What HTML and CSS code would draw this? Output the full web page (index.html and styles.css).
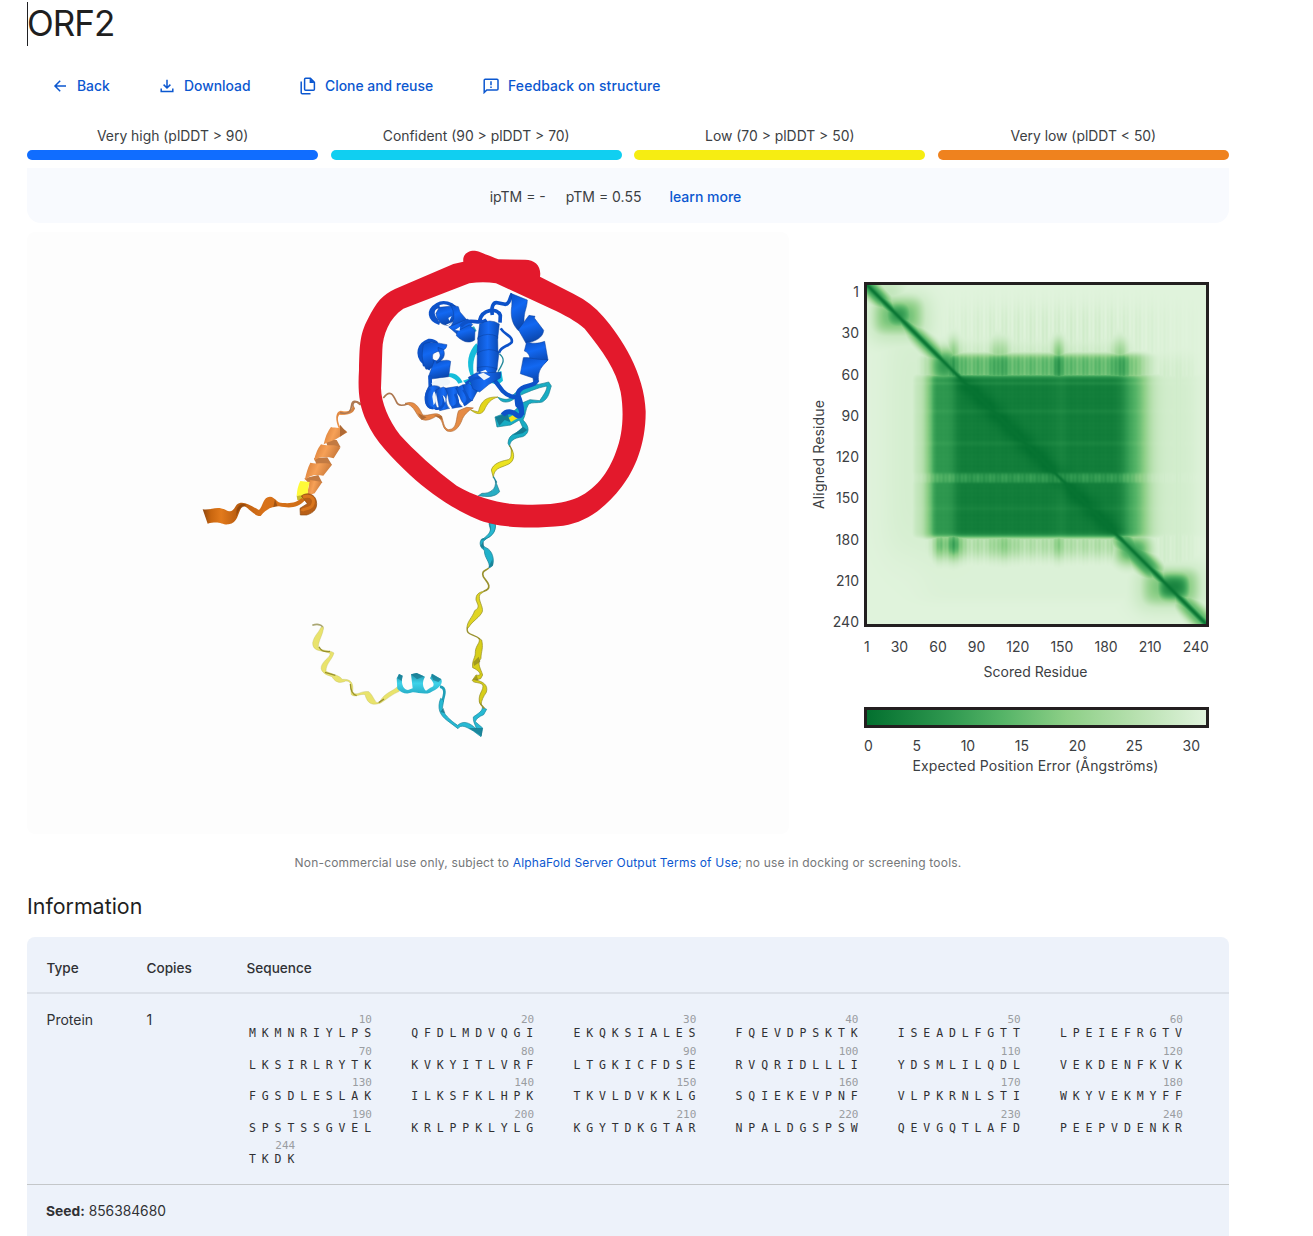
FILE: index.html
```html
<!DOCTYPE html>
<html lang="en">
<head>
<meta charset="utf-8">
<title>ORF2</title>
<link rel="stylesheet" href="styles.css">
</head>
<body>
<main class="page">
  <h1 class="title">ORF2</h1>
  <nav class="actions">
    <a class="action back"><svg width="14" height="14" viewBox="0 0 14 14"><path d="M13 7H2.400M7.200 1.800 2 7 7.200 12.200"/></svg><span>Back</span></a>
    <a class="action download"><svg width="14" height="14" viewBox="0 0 14 14"><path d="M7 .8V9M3.600 5.600 7 9 10.400 5.600M1.200 9.600v2.900H12.800V9.600"/></svg><span>Download</span></a>
    <a class="action clone"><svg width="16" height="18" viewBox="0 0 16 18"><path d="M5.600 1.300H10.400L14.400 5.300V12.300Q14.400 13.300 13.400 13.300H5.600Q4.600 13.300 4.600 12.300V2.300Q4.600 1.300 5.600 1.300zM1.200 4.500V15.800Q1.200 16.800 2.200 16.800H10.500"/><path class="solid" d="M9.600 1V6h5z"/></svg><span>Clone and reuse</span></a>
    <a class="action feedback"><svg width="16" height="16" viewBox="0 0 16 16"><path d="M1.200 14.500V2.200Q1.200 1.200 2.200 1.200H14Q15 1.200 15 2.200V10.900Q15 11.900 14 11.900H3.800zM8 3.300V7.200M8 8.500V10"/></svg><span>Feedback on structure</span></a>
  </nav>
  <section class="legend">
    <div class="level"><span>Very high (plDDT &gt; 90)</span><i class="bar very-high"></i></div>
    <div class="level"><span>Confident (90 &gt; plDDT &gt; 70)</span><i class="bar confident"></i></div>
    <div class="level"><span>Low (70 &gt; plDDT &gt; 50)</span><i class="bar low"></i></div>
    <div class="level"><span>Very low (plDDT &lt; 50)</span><i class="bar very-low"></i></div>
  </section>
  <section class="scores"><span class="iptm">ipTM = -</span><span class="ptm">pTM = 0.55</span><a class="more">learn more</a></section>
  <section class="results">
    <svg class="viewer" viewBox="27 232 762 602">
      <defs>
        <linearGradient id="blue" x1="0" y1="0" x2=".3" y2="1"><stop offset="0" stop-color="#0a4fc4"/><stop offset=".45" stop-color="#1268f2"/><stop offset="1" stop-color="#0b47ae"/></linearGradient>
        <linearGradient id="blue2" x1="0" y1="0" x2="1" y2="0"><stop offset="0" stop-color="#0b4fc0"/><stop offset=".5" stop-color="#176cf5"/><stop offset="1" stop-color="#0b4bb6"/></linearGradient>
        <linearGradient id="orange" x1="0" y1="0" x2="1" y2=".3"><stop offset="0" stop-color="#d47a35"/><stop offset=".5" stop-color="#f7a157"/><stop offset="1" stop-color="#c8783a"/></linearGradient>
        <linearGradient id="rust" x1="0" y1="0" x2="1" y2="0"><stop offset="0" stop-color="#8b4510"/><stop offset=".08" stop-color="#c9660f"/><stop offset=".18" stop-color="#e27a1c"/><stop offset=".35" stop-color="#b85c0f"/><stop offset=".6" stop-color="#d8721a"/><stop offset="1" stop-color="#cf6d16"/></linearGradient>
        <linearGradient id="cyan" x1="0" y1="0" x2="0" y2="1"><stop offset="0" stop-color="#1c8ca4"/><stop offset=".5" stop-color="#3fd3ea"/><stop offset="1" stop-color="#28afc8"/></linearGradient>
      </defs>
      <!-- N-terminal tail and helix -->
      <g transform="translate(190 380) scale(.33333)">
        <path class="line tan w5" d="M515 75C495 55 482 70 493 88"/>
        <path fill="url(#orange)" d="M492 78C500 98 475 108 448 104C440 112 444 130 456 150L449 150C434 120 436 95 452 92C470 95 482 96 487 82Z"/>
        <path fill="#c27a42" d="M405 178L440 180L452 202L415 205ZM372 234L412 232L426 255L382 260ZM343 295L385 285L397 308L360 315Z"/>
        <path fill="url(#orange)" d="M423 141C435 145 460 140 472 157L440 176C425 184 415 184 401 193Q408 160 423 141Z"/>
        <path fill="url(#orange)" d="M393 193C415 200 435 190 451 203L431 235C410 230 390 228 372 242Q378 212 393 193Z"/>
        <path fill="url(#orange)" d="M361 248C380 254 408 245 426 254L400 287C375 283 360 285 344 302Q350 270 361 248Z"/>
        <path fill="url(#orange)" d="M360 300L397 306L374 340L350 348Z"/>
        <path fill="#c9bc2d" d="M320 347L345 340L350 362L322 360Z"/>
        <path fill="#fffa38" d="M331 303L359 306Q353 323 353 345L320 347Q322 320 331 303Z"/>
        <path fill="url(#rust)" d="M38 388C65 392 78 376 106 389C128 402 130 387 140 374C158 359 180 376 207 390C219 379 219 350 240 350C257 351 259 370 280 369C305 371 320 367 335 354L345 361C325 384 300 386 267 379C245 379 225 390 212 408C190 409 175 379 159 379C143 390 147 430 116 433C96 436 90 421 53 431Z"/>
        <path fill="#74380b" opacity=".55" d="M140 388Q150 366 170 374L161 380Q147 382 139 410ZM255 357L262 378L250 382Z"/>
        <path fill="#b85f17" stroke="#8d4a12" stroke-width="2" d="M334 348C350 335 375 342 379 363C384 386 370 399 350 405L331 405L330 385L352 371Z"/>
        <path fill="none" stroke="#d9761d" stroke-width="9" d="M339 351C366 344 377 358 366 378C353 392 340 382 336 393"/>
      </g>
      <!-- C-terminal tail -->
      <g transform="translate(300 500) scale(.33333)">
        <path class="line pale w5" d="M37 376C54 370 72 375 67 388"/>
        <path fill="#e9e36c" stroke="#b9b65b" stroke-width="1" d="M70 380C72 400 55 420 55 441C65 455 90 449 102 459C96 480 78 490 78 514C94 522 122 527 126 538C154 536 161 549 158 575C172 592 180 570 207 575C224 592 224 612 238 607C255 575 280 575 294 558L298 574C276 583 260 598 242 609C222 616 203 616 195 584C180 580 166 594 154 584C150 563 159 543 137 543C116 554 102 542 96 530C69 523 58 510 66 494C76 476 87 475 91 461C72 449 37 459 38 428C43 405 55 400 62 383Z"/>
        <path class="line olive w4" d="M57 440Q65 458 90 454M75 517L106 526M151 552Q152 582 170 587M236 608L252 597"/>
        <path fill="url(#cyan)" d="M290 535L297 522L308 527C303 545 306 567 324 570L338 565L333 523L350 519L375 530C366 545 367 562 378 572L391 563C408 560 400 545 390 535L397 521L424 538C431 555 411 568 390 578C373 585 350 576 338 577C321 584 304 580 292 566Z"/>
        <path fill="#19788e" opacity=".7" d="M292 535L297 522L308 527L305 543ZM333 523L350 519L372 529L351 538ZM393 522L424 537L415 546L399 540Z"/>
        <path fill="none" stroke="#1f9eb7" stroke-width="8" d="M420 560C440 563 433 585 427 605"/>
        <path fill="#27b9d3" stroke="#17879d" stroke-width="2" d="M422 595C410 625 420 646 442 662L474 686C483 672 498 680 520 693L543 710L548 684L526 665Q529 653 551 644L560 628L547 622C548 633 535 640 520 651C519 670 530 680 528 686C507 666 489 661 473 676C450 661 430 641 427 625L431 602Z"/>
        <path class="line olive w5" d="M553 625C542 613 535 607 543 596"/>
        <path fill="#d7ce19" stroke="#918a20" stroke-width="2" d="M538 605C534 580 553 570 548 554C535 545 520 550 517 541L528 525C552 530 536 510 518 503C515 480 527 474 526 455C527 435 545 425 535 415L545 420C551 445 543 455 543 475C530 491 542 505 548 525L542 536L527 540C548 544 566 555 559 577C550 590 545 600 543 614Z"/>
        <path class="line olive w4" d="M540 417C520 400 495 407 503 380"/>
        <path fill="#e0d523" stroke="#8e8924" stroke-width="2" d="M501 385C500 365 517 353 524 332C542 322 532 313 528 300C527 283 537 276 553 274L540 283C532 300 551 319 547 335C540 352 517 363 506 382Z"/>
        <path class="line olive w5" d="M551 274C584 263 555 240 550 230C543 212 557 213 566 204"/>
        <path fill="#20b1ca" stroke="#15788c" stroke-width="2" d="M568 204C570 184 553 175 553 151C541 144 536 128 545 117L568 111C580 104 569 85 567 70L585 70C589 90 578 103 566 111L552 122C544 130 550 140 558 143C577 150 585 180 577 198Z"/>
        <path class="deep" d="M541 138L551 124L552 147ZM564 205L577 178L579 195ZM421 636L430 623L436 640ZM507 684L548 684L545 709Z"/>
        <path fill="#7f781f" opacity=".6" d="M520 486L536 470L541 485L522 498ZM517 541L530 526L535 541Z"/>
      </g>
      <!-- folded core -->
      <g transform="translate(340 240) scale(.33333)">
        <path class="line tan w5" d="M0 518C48 530 26 485 42 484Q49 483 62 495M130 474C150 448 159 463 169 485C175 501 192 496 204 491"/>
        <path fill="#e58b45" stroke="#b06b36" stroke-width="2" d="M195 490C218 484 230 487 248 525C268 530 288 512 305 529C311 548 312 567 326 569C354 568 347 530 356 512L380 502L400 504C383 513 374 524 368 535C357 567 340 579 321 573C302 560 314 538 288 529C275 537 253 549 237 531C223 512 221 497 195 490Z"/>
        <path fill="#b06a35" d="M234 520L260 532L245 540ZM282 525L305 528L307 540ZM0 554L19 576L0 590Z"/>
        <path fill="#e3d51a" stroke="#9f971e" stroke-width="2" d="M392 510L415 516C423 480 440 470 474 471C452 477 442 490 433 510C423 527 408 522 392 510Z"/>
        <path fill="#18acc3" stroke="#177f92" stroke-width="2" d="M474 472C490 478 508 485 520 464C545 438 590 436 626 426L634 438C628 453 628 474 607 486C590 490 576 486 566 492C555 510 558 524 549 540C572 562 567 582 548 590C520 594 509 604 509 620L504 610C505 577 538 581 549 564L538 540L512 555L471 561L465 531L499 518C515 520 530 510 544 490L570 479L599 482C610 466 623 448 620 438C590 444 562 456 528 472C507 492 483 490 474 472Z"/>
        <path fill="#137c94" d="M466 532L502 520L511 546L494 540L478 557ZM549 560L562 570L548 580L519 586Z"/>
        <path class="line olive w4" d="M509 617Q519 633 517 646"/>
        <path fill="#ece31f" stroke="#918d1d" stroke-width="2" d="M514 626C529 650 518 669 500 675C480 684 462 684 460 713L454 690C459 672 480 664 501 660C516 657 513 646 514 626Z"/>
        <path class="line cyanline w4" d="M460 710L470 728"/>
        <path fill="#28adc3" stroke="#1d7789" stroke-width="2" d="M466 722L479 755C463 774 438 770 415 767L426 760C450 761 470 748 466 722Z"/>
        <path fill="#28b8d1" stroke="#187b8d" stroke-width="2" d="M448 849L466 851C468 879 455 892 425 900C451 881 456 872 448 849Z"/>
      </g>
      <g transform="translate(400 280) scale(.33333)">
        <path fill="#15bdda" d="M229 190L239 205C219 230 217 255 222 290L211 285C198 250 204 216 229 190ZM146 281C163 275 180 289 188 307L175 311C166 294 153 292 146 290ZM189 302L228 288L249 325L230 337L210 325ZM264 289L304 273L309 302L294 315L272 308Z"/>
        <path class="line cyanline w4" d="M298 221C320 239 306 254 294 275"/>
        <path fill="#28a6ba" d="M193 149L222 139L230 153L203 165Z"/>
        <path fill="#f0e51b" d="M326 413L345 401L354 414L333 426Z"/>
        <path class="coil w8" d="M119 130C86 119 81 91 112 73C132 61 155 72 165 82M112 124C91 102 97 82 119 80"/>
        <g class="ribbon">
          <path d="M118 82L165 77C175 95 161 134 141 136C116 135 108 110 108 100Z"/>
          <path d="M150 74L175 80L180 96L200 119L173 151L149 143C165 125 166 97 150 74Z"/>
          <path d="M146 141L203 117L218 134L181 171Z"/>
          <path d="M172 153L208 135L225 151L224 180C206 193 186 184 169 167Z"/>
        </g>
        <path class="slit" d="M145 114L155 108L148 123ZM137 134L157 126L146 136ZM165 150L180 140L179 152Z"/>
        <path class="coil w9" d="M182 139C209 107 235 138 260 120M238 124C246 85 293 83 301 106L300 128M277 105C273 83 279 65 292 68L315 73C333 71 326 55 337 42"/>
        <path class="coil w7" d="M302 145C315 166 340 168 335 187C321 202 306 196 297 218"/>
        <g class="ribbon2">
          <path d="M239 132Q270 114 298 132L293 176Q264 167 233 178Z"/>
          <path d="M234 172Q265 155 293 170L294 221Q264 212 231 225Z"/>
          <path d="M232 218Q268 200 297 217L291 269Q266 259 231 275Z"/>
          <path d="M232 263Q258 255 291 266L281 295L242 293Z"/>
        </g>
        <path class="slit" d="M241 275L257 269L269 286L252 300Z"/>
        <g class="ribbon">
          <path d="M332 40L382 60C381 87 372 91 372 124C370 140 366 152 354 151C341 136 332 119 334 88C338 63 334 56 332 40Z"/>
          <path d="M355 149L387 106C401 110 409 105 403 114L431 151C429 172 410 183 378 190L368 172Z"/>
          <path d="M373 213L380 185C397 192 415 191 434 184L444 240C431 257 410 262 380 254C396 239 389 218 373 213Z"/>
          <path d="M361 281L370 233C388 231 407 240 444 239C428 260 412 266 416 306L401 309L399 294Z"/>
        </g>
        <path class="coil w10" d="M409 300C410 323 360 310 353 342C369 377 365 391 367 405M277 292L308 333Q330 355 354 350"/>
        <path class="coil w8" d="M71 248C48 224 54 193 87 181Q101 180 111 190M72 233C59 211 66 188 91 190M84 269L103 240M62 210L74 258"/>
        <g class="ribbon">
          <path d="M70 193C91 180 115 190 141 194C139 218 112 207 98 224C95 240 104 244 102 261L78 268C62 239 67 216 70 193Z"/>
          <path d="M87 286L103 241C122 248 137 235 152 244L146 290L87 298Z"/>
          <path d="M110 243C132 224 112 218 114 202L130 208C138 226 130 241 110 250Z"/>
        </g>
        <path class="coil w9" d="M90 286L91 324"/>
        <path class="slit" d="M94 310Q120 288 144 298Q158 305 143 316L105 322Z"/>
        <g class="ribbon2">
          <path d="M85 321C100 314 116 317 121 323C101 337 99 363 114 388L93 386C67 376 74 342 85 321Z"/>
          <path d="M107 330L130 321L153 332C132 341 137 378 149 385L119 392Z"/>
          <path d="M135 325L173 319L183 344C171 349 171 369 187 380L161 384C139 374 151 345 135 325Z"/>
          <path d="M167 325L189 314L209 333C200 340 209 360 218 360L197 376C178 364 180 341 167 325Z"/>
          <path d="M188 315L207 310L234 330L216 363L199 348Z"/>
          <path d="M205 292L230 278L303 277L301 294L267 313L239 336L219 327Z"/>
        </g>
        <path class="coil w7" d="M99 384C74 385 73 341 89 325M106 386C133 389 135 363 130 347M155 382C180 379 175 358 165 342M191 375C213 362 202 348 190 329M197 311Q221 290 251 292"/>
        <path class="slit" d="M97 350Q102 325 106 341Q110 366 101 376ZM128 345Q141 353 135 369ZM171 340Q182 352 177 360ZM233 284L250 278L271 290L252 301Z"/>
        <path class="coil w12" d="M308 405C320 390 337 393 351 406C366 415 371 388 353 375L350 349"/>
      </g>
      <path class="marker" fill-rule="evenodd" transform="translate(340 240) scale(.33333)" d="M370 65C367 45 382 31 405 32C417 33 445 47 475 58L553 59C585 58 605 79 600 110L700 161Q755 188 790 230C843 290 914 400 917 514C918 610 885 690 845 740C795 805 739 847 670 857C570 867 470 864 410 837C330 802 268 758 210 705C155 652 105 603 80 545C54 493 54 440 57 390C59 320 58 284 84 236C110 185 128 164 165 147L340 72ZM388 130L190 206C148 233 128 285 127 330L123 445C124 488 145 540 180 585C220 629 285 690 350 737C400 767 460 785 510 791C590 798 660 793 702 777C766 753 807 695 828 635C848 585 853 520 842 456C829 390 788 333 734 266C710 244 670 223 635 207L468 130Q430 124 388 130Z"/>
    </svg>
    <div class="error-plot">
      <div class="matrix">
        <div class="y-title"><span>Aligned Residue</span></div>
        <div class="y-axis"><span>1</span><span>30</span><span>60</span><span>90</span><span>120</span><span>150</span><span>180</span><span>210</span><span>240</span></div>
        <canvas class="heatmap" width="339" height="339"></canvas>
      </div>
      <div class="x-axis"><span>1</span><span>30</span><span>60</span><span>90</span><span>120</span><span>150</span><span>180</span><span>210</span><span>240</span></div>
      <div class="x-title">Scored Residue</div>
      <div class="ramp"></div>
      <div class="ramp-axis"><span>0</span><span>5</span><span>10</span><span>15</span><span>20</span><span>25</span><span>30</span></div>
      <div class="ramp-title">Expected Position Error (Ångströms)</div>
    </div>
  </section>
  <p class="terms"><span>Non-commercial use only, subject to <a>AlphaFold Server Output Terms of Use</a>; no use in docking or screening tools.</span></p>
  <h2 class="heading">Information</h2>
  <section class="info">
    <div class="row head"><span>Type</span><span>Copies</span><span>Sequence</span></div>
    <div class="row body"><span>Protein</span><span>1</span>
      <div class="sequence">
        <div class="chunk"><i>10</i><b>MKMNRIYLPS</b></div><div class="chunk"><i>20</i><b>QFDLMDVQGI</b></div><div class="chunk"><i>30</i><b>EKQKSIALES</b></div><div class="chunk"><i>40</i><b>FQEVDPSKTK</b></div><div class="chunk"><i>50</i><b>ISEADLFGTT</b></div><div class="chunk"><i>60</i><b>LPEIEFRGTV</b></div>
        <div class="chunk"><i>70</i><b>LKSIRLRYTK</b></div><div class="chunk"><i>80</i><b>KVKYITLVRF</b></div><div class="chunk"><i>90</i><b>LTGKICFDSE</b></div><div class="chunk"><i>100</i><b>RVQRIDLLLI</b></div><div class="chunk"><i>110</i><b>YDSMLILQDL</b></div><div class="chunk"><i>120</i><b>VEKDENFKVK</b></div>
        <div class="chunk"><i>130</i><b>FGSDLESLAK</b></div><div class="chunk"><i>140</i><b>ILKSFKLHPK</b></div><div class="chunk"><i>150</i><b>TKVLDVKKLG</b></div><div class="chunk"><i>160</i><b>SQIEKEVPNF</b></div><div class="chunk"><i>170</i><b>VLPKRNLSTI</b></div><div class="chunk"><i>180</i><b>WKYVEKMYFF</b></div>
        <div class="chunk"><i>190</i><b>SPSTSSGVEL</b></div><div class="chunk"><i>200</i><b>KRLPPKLYLG</b></div><div class="chunk"><i>210</i><b>KGYTDKGTAR</b></div><div class="chunk"><i>220</i><b>NPALDGSPSW</b></div><div class="chunk"><i>230</i><b>QEVGQTLAFD</b></div><div class="chunk"><i>240</i><b>PEEPVDENKR</b></div>
        <div class="chunk"><i>244</i><b>TKDK</b></div>
      </div>
    </div>
    <div class="seed"><strong>Seed:</strong> 856384680</div>
  </section>
</main>
<script src="heatmap.js"></script>
</body>
</html>
```
FILE: styles.css
```css
* { box-sizing: border-box; }
body { margin: 0; background: #fff; color: #3c4043; font: 14px/20px Inter, Roboto, sans-serif; }
.page { width: 1229px; height: 1236px; padding-left: 27px; overflow: hidden; }
.title { width: 120px; height: 44px; margin: 2px 0 0; border-left: 1px solid #202124; color: #1f1f1f; font-size: 35px; line-height: 43px; font-weight: 400; letter-spacing: -1px; text-indent: -1px; }
.actions { display: flex; height: 80px; padding: 0 0 0 26px; align-items: center; color: #0b57d0; font-size: 13.9px; font-weight: 500; }
.action { display: flex; align-items: center; }
.action svg { fill: none; stroke: #0b57d0; stroke-width: 1.5; }
.action .solid { fill: #0b57d0; stroke: none; }
.back { width: 107px; gap: 10px; }
.download { width: 140px; gap: 10px; }
.clone { width: 183px; gap: 9px; }
.feedback { gap: 9px; letter-spacing: .15px; }
.legend { display: grid; grid-template-columns: repeat(4, 1fr); column-gap: 12.3px; font-size: 13.9px; }
.level { display: flex; flex-direction: column; align-items: center; gap: 4px; }
.bar { width: 100%; height: 10px; border-radius: 5px; }
.very-high { background: #106dff; }
.confident { background: #10cff1; }
.low { background: #f6ed12; }
.very-low { background: #ef821e; }
.scores { display: flex; justify-content: center; height: 55px; margin-top: 8px; padding: 19px 25px 0 0; border-radius: 0 0 14px 14px; background: #f8fafe; line-height: 20px; }
.ptm { margin: 0 28px 0 20px; }
.more, .terms a { color: #0b57d0; }
.more { font-weight: 500; }
.results { display: flex; margin-top: 9px; height: 602px; }
.viewer { width: 762px; height: 602px; border-radius: 8px; background: #fdfdfd; }
.line { fill: none; }
.tan { stroke: #ad7851; }
.pale { stroke: #aaa773; }
.olive { stroke: #99912e; }
.cyanline { stroke: #22889a; }
.w4 { stroke-width: 4; }
.w5 { stroke-width: 5; }
.deep { fill: #146c80; opacity: .65; }
.coil { fill: none; stroke: #0d52c9; stroke-linejoin: round; }
.w7 { stroke-width: 8; }
.w8 { stroke-width: 10; }
.w9 { stroke-width: 11; }
.w10 { stroke-width: 13; }
.w12 { stroke-width: 15; }
.ribbon path { fill: url(#blue); stroke: #0a3f9c; stroke-width: 1.5; }
.ribbon2 path { fill: url(#blue2); stroke: #0a3f9c; stroke-width: 1.5; }
.slit { fill: #eef5fa; }
.marker { fill: #e3192c; }
.error-plot { width: 420px; padding: 50px 0 0 22px; }
.matrix { display: flex; height: 345px; }
.y-title { display: flex; width: 16px; align-items: center; justify-content: center; }
.y-title span { writing-mode: vertical-rl; transform: rotate(180deg); letter-spacing: .15px; }
.y-axis { display: flex; flex-direction: column; justify-content: space-between; width: 32px; height: 350px; text-align: right; }
.heatmap { width: 345px; height: 345px; margin-left: 5px; border: 3px solid #231f20; }
.x-axis, .ramp-axis { display: flex; justify-content: space-between; width: 345px; margin: 10px 0 0 53px; }
.ramp-axis { width: 336px; margin-top: 8px; }
.x-title, .ramp-title { width: 343px; margin-left: 53px; text-align: center; }
.x-title { margin-top: 5px; }
.ramp-title { letter-spacing: .15px; }
.ramp { width: 345px; height: 21px; margin: 25px 0 0 53px; border: 3px solid #231f20; background: linear-gradient(90deg, #03702f, #319a51 25%, #55b467 40%, #8dcf87 59%, #b6e0ae 79%, #e0f3dc); }
.terms { height: 20px; margin: 19px 0 0; color: #757779; font-size: 12px; letter-spacing: .19px; text-align: center; }
.heading { height: 32px; margin: 17px 0 0; color: #1f1f1f; font-size: 21.4px; line-height: 32px; font-weight: 400; }
.info { margin-top: 15px; border-radius: 8px 8px 0 0; background: #edf2fa; color: #303134; }
.row { display: grid; grid-template-columns: 100px 100px 1fr; padding-left: 19.5px; }
.head { height: 57px; padding-top: 21px; border-bottom: 2px solid #dce1e9; font-size: 13.6px; font-weight: 500; }
.body { height: 191px; padding-top: 16px; border-bottom: 1px solid #c4c7c9; }
.sequence { display: grid; grid-template-columns: repeat(6, 162.2px); grid-auto-rows: 31.6px; padding-left: 2.5px; font-family: "DejaVu Sans Mono", monospace; }
.chunk { display: flex; width: max-content; flex-direction: column; padding-top: 4px; }
.chunk i { height: 12px; color: #9a9da1; font-size: 11px; line-height: 12px; font-style: normal; text-align: right; }
.chunk b { font-size: 11.5px; line-height: 15px; font-weight: 400; letter-spacing: 5.87px; margin-right: -5px; }
.seed { height: 60px; padding: 16px 0 0 19px; font-size: 13.8px; }
```
FILE: heatmap.js
```js
const canvas = document.querySelector('.heatmap');
const ctx = canvas.getContext('2d');
const size = 339;
const image = ctx.createImageData(size, size);
const ramp = [[0, 224, 243, 220], [0.21, 182, 224, 174], [0.41, 141, 207, 135], [0.6, 85, 180, 103], [0.75, 49, 154, 81], [1, 3, 112, 47]];

const edge = (v, at, soft) => 1 / (1 + Math.exp(-(v - at) / soft));
const span = (v, from, to, soft) => edge(v, from, soft) * (1 - edge(v, to, soft));
const peak = (v, at, width) => Math.exp(-((v - at) ** 2) / (2 * width * width));
const box = (x, y, x0, x1, y0, y1, soft, level) => level * span(x, x0, x1, soft) * span(y, y0, y1, soft);
// compact segment, elongated along the diagonal
const blob = (c, d, length, width, level) => level * span(c, -length, length, 3) * (1 - edge(d, width, 3));

function confidence(x, y) {
  const stripesX = Math.sin(x * 1.55) * 0.5 + Math.sin(x * 0.47) * 0.5;
  const stripesY = Math.sin(y * 1.4) * 0.5 + Math.sin(y * 0.39) * 0.5;
  const spikes = peak(x, 86, 4) + 0.6 * peak(x, 129, 4) + 0.45 * peak(x, 137, 4) + peak(x, 191, 4) + 0.9 * peak(x, 253, 5);
  const d = Math.abs(x - y);
  const c = (x + y) / 2;
  let v = 0;

  // folded domain and its shoulders
  const columns = 0.16 * edge(x, 46, 2) + 0.33 * edge(x, 58, 2) + 0.28 * edge(x, 65, 1.5) + 0.15 * edge(x, 87, 2)
    - 0.22 * edge(x, 257, 3) - 0.25 * edge(x, 270, 4) - 0.28 * edge(x, 280, 3) - 0.1 * edge(x, 290, 4) - 0.06 * edge(x, 326, 4);
  let core = columns * span(y, 89, 252, 1.6);
  core *= 1 - 0.22 * span(y, 188, 197, 0.8) * (0.8 + 0.25 * stripesX) - 0.07 * peak(y, 98, 1.5) - 0.04 * peak(y, 126, 1.5) - 0.04 * peak(y, 158, 1.5) - 0.03 * peak(y, 223, 2)
    - 0.04 * peak(x, 193, 4) + 0.007 * stripesY + 0.008 * stripesX + 0.08 * Math.exp(-((d / 14) ** 2));
  v = Math.max(v, core);
  v = Math.max(v, span(x, 62, 276, 6) * span(y, 69, 94, 1.8) * (0.55 + 0.06 * stripesX + 0.2 * spikes));
  v = Math.max(v, span(x, 72, 265, 6) * span(y, 57, 92, 5) * (0.1 + 0.04 * stripesX + 0.4 * spikes));
  v = Math.max(v, span(x, 64, 262, 4) * span(y, 248, 270, 4.5) * (0.27 + 0.07 * stripesX + 0.55 * peak(x, 87, 5) + 0.4 * peak(x, 72, 5) + 0.2 * peak(x, 136, 8) + 0.2 * peak(x, 191, 4)));
  v = Math.max(v, 0.045 * span(x, 90, 285, 22) * span(y, 22, 100, 6) * (1 + stripesX));
  v = Math.max(v, 0.06 * span(x, 20, 70, 8) * span(y, 40, 268, 12) + 0.025 * span(x, 57, 290, 8) * span(y, 250, 315, 3));
  v = Math.max(v, 0.06 * span(x, 270, 325, 4) * span(y, 70, 290, 5) * (1 + 0.4 * stripesX));

  // compact segments along the diagonal
  v = Math.max(v, box(x, y, 18, 44, 18, 41, 4, 0.92), box(x, y, 9, 53, 15, 46, 4, 0.55), box(x, y, 5, 60, 12, 54, 6, 0.2));
  v = Math.max(v, blob(c - 5, d, 16, 10, 0.78), box(x, y, -4, 34, -4, 18, 5, 0.2));
  v = Math.max(v, blob(c - 62, d, 20, 9, 0.7), box(x, y, 64, 90, 66, 95, 4, 0.85));
  v = Math.max(v, box(x, y, 251, 280, 253, 276, 4, 0.8), blob(c - 270, d, 20, 13, 0.76));
  v = Math.max(v, box(x, y, 290, 322, 289, 314, 3.5, 0.95), box(x, y, 277, 329, 286, 317, 4, 0.5), box(x, y, 270, 334, 282, 322, 6, 0.2));
  v = Math.max(v, blob(c - 330, d, 18, 12, 0.6));

  v = Math.max(v, 0.72 * Math.exp(-((d / 9) ** 2)));
  const line = 0.9 * Math.exp(-((d / 2.8) ** 2));
  return Math.min(1, Math.max(0, v * (1 - line) + 0.98 * line));
}

function shade(v) {
  for (let k = 1; k < ramp.length; k++) {
    if (v <= ramp[k][0]) {
      const a = ramp[k - 1], b = ramp[k], t = (v - a[0]) / (b[0] - a[0]);
      return [1, 2, 3].map(i => a[i] + (b[i] - a[i]) * t);
    }
  }
  return ramp[ramp.length - 1].slice(1);
}

for (let y = 0; y < size; y++) {
  for (let x = 0; x < size; x++) {
    const [r, g, b] = shade(confidence(x, y));
    image.data.set([r, g, b, 255], (y * size + x) * 4);
  }
}
ctx.putImageData(image, 0, 0);
```
